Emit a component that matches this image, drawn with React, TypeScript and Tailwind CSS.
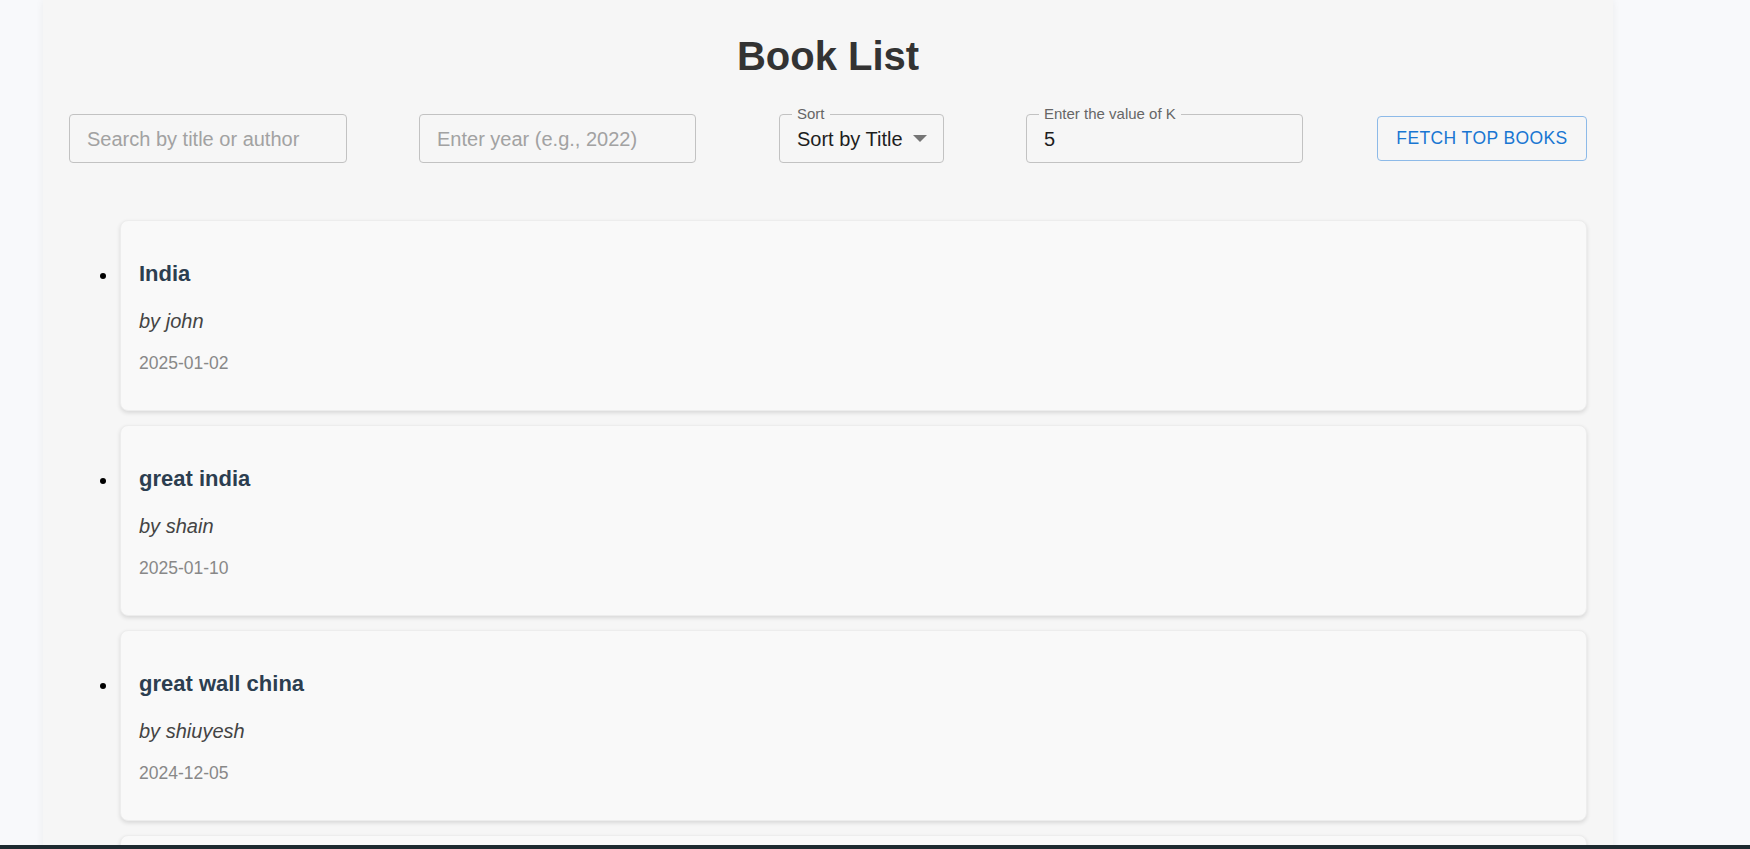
import React, { useState } from 'react';

type Book = {
  title: string;
  author: string;
  date: string;
};

const BOOKS: Book[] = [
  { title: 'India', author: 'john', date: '2025-01-02' },
  { title: 'great india', author: 'shain', date: '2025-01-10' },
  { title: 'great wall china', author: 'shiuyesh', date: '2024-12-05' },
  { title: 'the silent river', author: 'maya', date: '2024-11-18' },
];

const FONT = "font-['Liberation_Sans',Arial,sans-serif]";

const BookCard: React.FC<{ book: Book }> = ({ book }) => (
  <li className="flex items-start">
    <span className="mt-[53px] ml-[31px] mr-[14px] h-[6px] w-[6px] shrink-0 rounded-full bg-black" />
    <div className="flex-1 rounded-[8px] border border-[#ededed] bg-[#f9f9f9] px-[18px] pt-[20px] pb-[20px] shadow-[0_2px_4px_rgba(0,0,0,0.12)]">
      <h3 className="mt-[20px] text-[22px] font-bold leading-[25px] text-[#2c3e50]">{book.title}</h3>
      <p className="mt-[24px] text-[20px] italic leading-[23px] text-[#444]">by {book.author}</p>
      <p className="mt-[20px] mb-[17px] text-[17.5px] leading-[20px] text-[#888]">{book.date}</p>
    </div>
  </li>
);

const App: React.FC = () => {
  const [search, setSearch] = useState('');
  const [year, setYear] = useState('');
  const [k, setK] = useState('5');

  return (
    <div className={`flex h-screen flex-col overflow-hidden bg-[#f8f9fb] ${FONT}`}>
      <div className="flex-1 overflow-hidden">
        <div className="ml-[43px] min-h-full w-[1570px] bg-[#f6f6f6] px-[26px] shadow-[0_0_8px_rgba(0,0,0,0.06)]">
          <h1 className="pt-[33px] text-center text-[40px] font-bold leading-[46px] text-[#333]">Book List</h1>

          {/* Filters */}
          <div className="mt-[35px] flex items-center">
            <div className="flex h-[49px] w-[278px] items-center rounded-[4px] border border-[#c2c2c2] px-[17px]">
              <input
                value={search}
                onChange={e => setSearch(e.target.value)}
                placeholder="Search by title or author"
                className="w-full bg-transparent text-[20px] text-[#222] outline-none placeholder:text-[#a2a2a2]"
              />
            </div>

            <div className="ml-[72px] flex h-[49px] w-[277px] items-center rounded-[4px] border border-[#c2c2c2] px-[17px]">
              <input
                value={year}
                onChange={e => setYear(e.target.value)}
                placeholder="Enter year (e.g., 2022)"
                className="w-full bg-transparent text-[20px] text-[#222] outline-none placeholder:text-[#a2a2a2]"
              />
            </div>

            <div className="relative ml-[83px] flex h-[49px] w-[165px] items-center rounded-[4px] border border-[#c2c2c2] pl-[17px] pr-[16px]">
              <span className="absolute left-[12px] top-[-10px] bg-[#f6f6f6] px-[5px] text-[15px] leading-[18px] text-[#666]">Sort</span>
              <span className="flex-1 text-[20px] text-[#1e1e1e]">Sort by Title</span>
              <svg width="14" height="7" viewBox="0 0 14 7" className="shrink-0">
                <path d="M0 0 L14 0 L7 7 Z" fill="#757575" />
              </svg>
            </div>

            <div className="relative ml-[82px] flex h-[49px] w-[277px] items-center rounded-[4px] border border-[#c2c2c2] px-[17px]">
              <span className="absolute left-[12px] top-[-10px] bg-[#f6f6f6] px-[5px] text-[15px] leading-[18px] text-[#666]">Enter the value of K</span>
              <input
                value={k}
                onChange={e => setK(e.target.value)}
                className="w-full bg-transparent text-[20px] text-[#1e1e1e] outline-none"
              />
            </div>

            <button className="ml-[74px] h-[45px] w-[210px] rounded-[4px] border border-[#8dbae8] text-[17.5px] uppercase tracking-[0.4px] text-[#1976d2]">
              Fetch Top Books
            </button>
          </div>

          {/* Books */}
          <ul className="mt-[57px] space-y-[14px]">
            {BOOKS.map(book => (
              <BookCard key={book.title} book={book} />
            ))}
          </ul>
        </div>
      </div>
      <div className="h-[4px] shrink-0 bg-[#1e2a30]" />
    </div>
  );
};

export default App;
